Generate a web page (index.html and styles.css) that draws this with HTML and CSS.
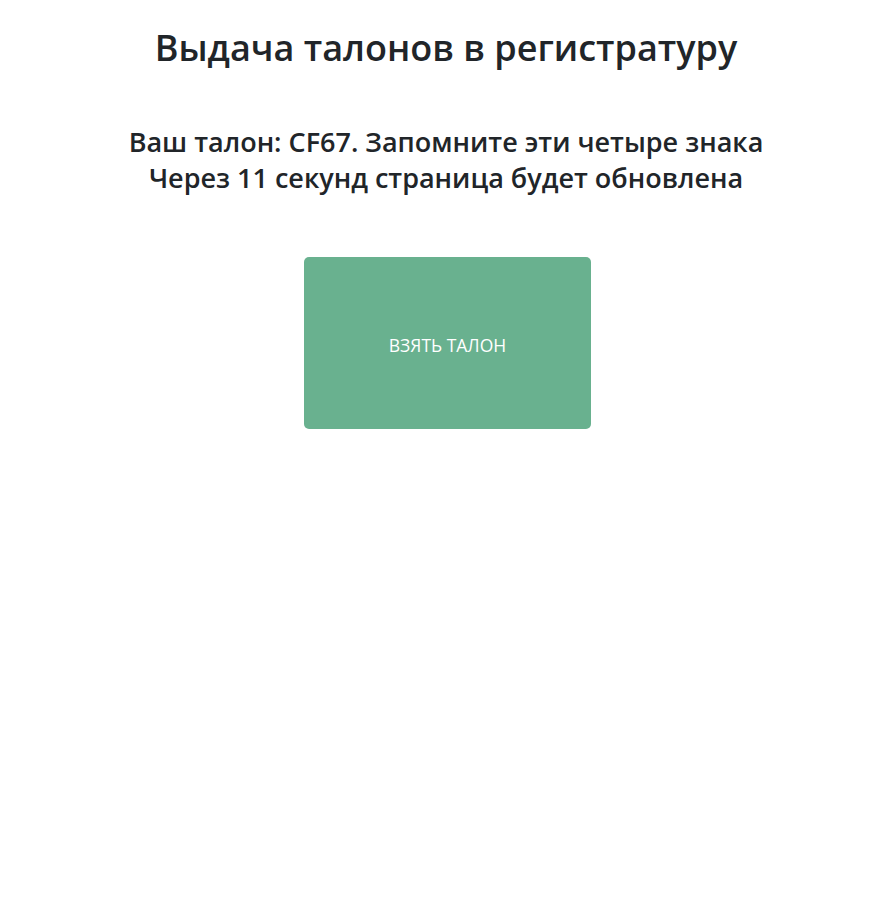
FILE: index.html
```html
<!DOCTYPE html>
<html lang="ru">
<head>
<meta charset="utf-8">
<title>Выдача талонов</title>
<link rel="stylesheet" href="styles.css">
</head>
<body>
<main class="page">
  <h1 class="title">Выдача талонов в регистратуру</h1>
  <div class="message">
    <p class="line">Ваш талон: CF67. Запомните эти четыре знака</p>
    <p class="line">Через 11 секунд страница будет обновлена</p>
  </div>
  <button class="take-btn" type="button">ВЗЯТЬ ТАЛОН</button>
</main>
</body>
</html>
```

FILE: styles.css
```css
* { box-sizing: border-box; }
body {
  margin: 0;
  background: #fff;
  color: #212529;
  font-family: "Open Sans", "Noto Sans", "DejaVu Sans", sans-serif;
}
.page {
  display: flex;
  flex-direction: column;
  align-items: center;
  padding-top: 24px;
}
.title {
  margin: 0;
  font-size: 36px;
  font-weight: 600;
  line-height: 48px;
  text-align: center;
}
.message {
  margin-top: 52px;
  text-align: center;
}
.line {
  margin: 0;
  font-size: 27px;
  font-weight: 600;
  line-height: 36px;
}
.take-btn {
  margin-top: 61px;
  margin-left: 3px;
  width: 287px;
  height: 172px;
  padding: 4px 0 0;
  border: none;
  border-radius: 5px;
  background: #69b18f;
  color: #fff;
  font-family: inherit;
  font-size: 17.5px;
  font-weight: 400;
  cursor: pointer;
}
```
